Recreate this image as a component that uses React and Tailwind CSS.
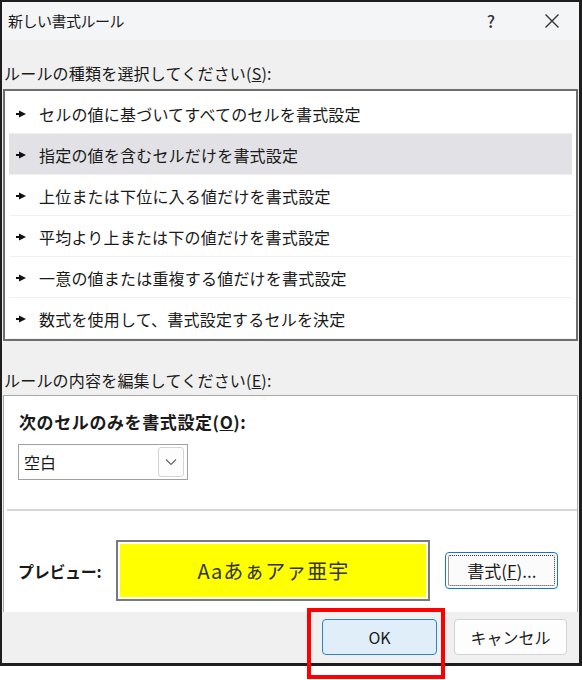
import React from "react";

const font = { fontFamily: '"Noto Sans CJK JP", "Noto Sans", sans-serif' };

function Arrow() {
  return (
    <svg width="10" height="8" viewBox="0 0 10 8" className="shrink-0">
      <rect x="0" y="3" width="5" height="2" fill="#111" />
      <polygon points="3,0.6 10,4 3,7.4" fill="#111" />
    </svg>
  );
}

const items = [
  "セルの値に基づいてすべてのセルを書式設定",
  "指定の値を含むセルだけを書式設定",
  "上位または下位に入る値だけを書式設定",
  "平均より上または下の値だけを書式設定",
  "一意の値または重複する値だけを書式設定",
  "数式を使用して、書式設定するセルを決定",
];

export default function App() {
  return (
    <div className="relative w-[582px] h-[680px] bg-white text-[#1a1a1a]" style={font}>
      <div className="w-[582px] h-[666px] border-t-2 border-l-2 border-r-[3px] border-b-[3px] border-[#1e1e1e] flex flex-col bg-[#f0f0f0]">
        {/* title bar */}
        <div className="h-[38px] shrink-0 bg-[#f4f5f7] flex items-center pl-[6px] text-[15px] leading-[20px]">
          <span className="tracking-[-0.5px]">新しい書式ルール</span>
          <span className="ml-auto mr-[49px] text-[17px] font-medium text-[#333]">?</span>
          <svg width="16" height="16" viewBox="0 0 16 16" className="mr-[19px]">
            <path d="M1.5 1.5 L14.5 14.5 M14.5 1.5 L1.5 14.5" stroke="#333" strokeWidth="1.4" fill="none" />
          </svg>
        </div>

        {/* label 1 */}
        <div className="h-[49px] shrink-0 pt-[21px] pl-[2px] text-[16px] leading-[24px] tracking-[0.2px]">
          ルールの種類を選択してください(<span className="underline">S</span>):
        </div>

        {/* list */}
        <div className="ml-[1px] mr-[1px] h-[252px] shrink-0 border-2 border-[#6e6e6e] bg-white pt-[2px]">
          {items.map((t, i) => (
            <div
              key={i}
              className={
                i === 1
                  ? "mx-[4px] h-[41px] flex items-center gap-[13px] pl-[7px] pt-[2px] border-b border-[#f0f0f0] bg-[#e1e1e6] text-[16px] tracking-[0.2px]"
                  : "mx-[4px] h-[41px] flex items-center gap-[13px] pl-[7px] pt-[2px] border-b border-[#f0f0f0] text-[16px] tracking-[0.2px]"
              }
            >
              <Arrow />
              <span>{t}</span>
            </div>
          ))}
        </div>

        {/* label 2 */}
        <div className="h-[54px] shrink-0 pt-[27px] pl-[2px] text-[16px] leading-[24px] tracking-[0.2px]">
          ルールの内容を編集してください(<span className="underline">E</span>):
        </div>

        {/* panel */}
        <div className="ml-[1px] mr-[1px] h-[217px] shrink-0 border-t border-x border-[#a8a8a8] bg-white flex flex-col">
          <div className="pt-[14px] pl-[15px] text-[17px] leading-[24px] font-bold tracking-[0.6px]">
            次のセルのみを書式設定(<span className="underline">O</span>):
          </div>
          <div className="ml-[14px] mt-[10px] w-[170px] h-[36px] border border-[#a0a0a0] flex items-center pl-[5px] pr-[3px] text-[16px]">
            <span>空白</span>
            <div className="ml-auto w-[26px] h-[30px] border border-[#d4d4d4] rounded-[3px] bg-[#fdfdfd] flex items-center justify-center">
              <svg width="12" height="8" viewBox="0 0 12 8">
                <path d="M1 1.5 L6 6.5 L11 1.5" stroke="#666" strokeWidth="1.2" fill="none" />
              </svg>
            </div>
          </div>
          <div className="ml-[3px] mt-[29px] h-[2px] bg-[#d6d6d6]" />
          <div className="mt-[29px] flex items-center">
            <span className="ml-[14px] text-[16px] font-bold tracking-[-0.3px]">プレビュー:</span>
            <div className="ml-[15px] w-[314px] h-[61px] border-2 border-[#7a7a7a] p-[2px] bg-white">
              <div className="w-full h-full bg-[#ffff00] flex items-center justify-center text-[20px] text-[#333] tracking-[1px]">
                Aaあぁアァ亜宇
              </div>
            </div>
            <div className="ml-[15px] w-[113px] h-[37px] border border-[#1a73c7] rounded-[4px] bg-[#fbfbfb] p-[2px]">
              <div className="w-full h-full border border-dotted border-[#333] rounded-[2px] flex items-center justify-center text-[17px]">
                書式(<span className="underline">F</span>)...
              </div>
            </div>
          </div>
        </div>

        {/* footer */}
        <div className="flex-1 flex items-center justify-end pr-[12px] pb-[2px] gap-[17px]">
          <div className="w-[115px] h-[36px] border border-[#2b83d6] rounded-[4px] bg-[#e0eef9] flex items-center justify-center text-[16px]">
            OK
          </div>
          <div className="w-[113px] h-[36px] border border-[#d2d2d2] rounded-[4px] bg-[#fdfdfd] flex items-center justify-center text-[16px]">
            キャンセル
          </div>
        </div>
      </div>

      {/* red annotation */}
      <div className="absolute left-[307px] top-[608px] w-[138px] h-[71px] border-4 border-[#ff0000]" />
    </div>
  );
}
